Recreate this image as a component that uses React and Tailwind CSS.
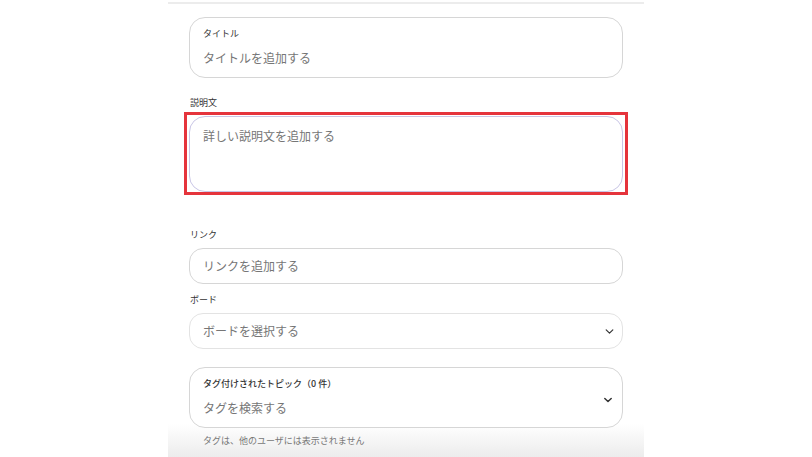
import React from "react";

const font = { fontFamily: '"Noto Sans CJK JP", "Noto Sans", sans-serif' };

function Chevron({ bold }) {
  return (
    <svg
      width={bold ? "8" : "9"}
      height={bold ? "6" : "5"}
      viewBox="0 0 10 6"
      fill="none"
      stroke="#333"
      strokeWidth={bold ? "1.8" : "1.4"}
      strokeLinecap="round"
      strokeLinejoin="round"
    >
      <path d="M1 1l4 4 4-4" />
    </svg>
  );
}

function Label({ children }) {
  return <div className="text-[9px] leading-[13px] text-[#333] pl-px">{children}</div>;
}

export default function App() {
  return (
    <div className="w-full h-[457px] bg-white overflow-hidden" style={font}>
      <div className="mx-auto w-[476px] h-[457px] bg-[linear-gradient(to_bottom,#ffffff_424px,#ececec_457px)]">
        <div className="pt-[2px]">
          <div className="h-[2px] bg-[#ececec]" />
        </div>

        <div className="px-[21px]">
          {/* タイトル */}
          <div className="mt-[13px] h-[61px] rounded-[16px] border border-[#d6d6d6] bg-white px-[13px] pt-[9px]">
            <div className="text-[9px] leading-[13px] text-[#333]">タイトル</div>
            <div className="mt-[9px] text-[12px] leading-[18px] text-[#767676]">タイトルを追加する</div>
          </div>

          {/* 説明文 */}
          <div className="mt-[18px]">
            <Label>説明文</Label>
          </div>
          <div className="relative mt-[7px]">
            <div className="h-[76px] rounded-[16px] border border-[#c9c6e6] bg-white px-[13px] pt-[10px]">
              <div className="text-[12px] leading-[18px] text-[#767676]">詳しい説明文を追加する</div>
            </div>
            <div className="pointer-events-none absolute -left-[5px] -right-[5px] -top-[4px] -bottom-[3px] border-[3px] border-[#e5343c]" />
          </div>

          {/* リンク */}
          <div className="mt-[36px]">
            <Label>リンク</Label>
          </div>
          <div className="mt-[7px] h-[36px] rounded-[14px] border border-[#d6d6d6] bg-white px-[13px] flex items-center">
            <div className="text-[12px] leading-[18px] text-[#767676]">リンクを追加する</div>
          </div>

          {/* ボード */}
          <div className="mt-[9px]">
            <Label>ボード</Label>
          </div>
          <div className="mt-[7px] h-[36px] rounded-[14px] border border-[#e3e3e3] bg-white pl-[13px] pr-[8px] flex items-center justify-between">
            <div className="text-[12px] leading-[18px] text-[#767676]">ボードを選択する</div>
            <Chevron />
          </div>

          {/* タグ */}
          <div className="mt-[18px] h-[61px] rounded-[16px] border border-[#d6d6d6] bg-white pl-[13px] pr-[10px] pt-[9px] flex items-start justify-between">
            <div>
              <div className="text-[9px] leading-[13px] text-[#333] font-medium">タグ付けされたトピック（0 件）</div>
              <div className="mt-[9px] text-[12px] leading-[18px] text-[#767676]">タグを検索する</div>
            </div>
            <div className="mt-[20px]">
              <Chevron bold />
            </div>
          </div>

          <div className="mt-[6px] pl-[14px] text-[9px] leading-[13px] text-[#777]">タグは、他のユーザには表示されません</div>
        </div>
      </div>
    </div>
  );
}
